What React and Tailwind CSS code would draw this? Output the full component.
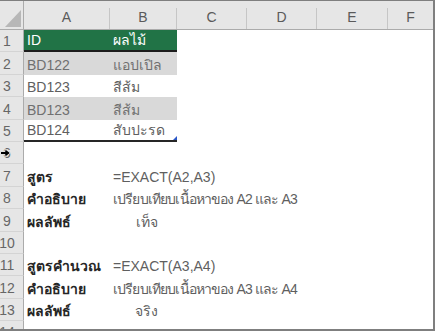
const cols = ["A", "B", "C", "D", "E", "F"];

const FONT = { fontFamily: '"Liberation Sans", "Noto Sans", "DejaVu Sans", sans-serif' };

const rows = [
  { n: 1, a: "ID", b: "ผลไม้", kind: "head" },
  { n: 2, a: "BD122", b: "แอปเปิล", kind: "zebra" },
  { n: 3, a: "BD123", b: "สีส้ม", kind: "plain" },
  { n: 4, a: "BD123", b: "สีส้ม", kind: "zebra" },
  { n: 5, a: "BD124", b: "สับปะรด", kind: "last" },
  { n: 6 },
  { n: 7, a: "สูตร", b: "=EXACT(A2,A3)", kind: "label" },
  { n: 8, a: "คำอธิบาย", b: "เปรียบเทียบเนื้อหาของ A2 และ A3", kind: "desc" },
  { n: 9, a: "ผลลัพธ์", b: "เท็จ", kind: "result" },
  { n: 10 },
  { n: 11, a: "สูตรคำนวณ", b: "=EXACT(A3,A4)", kind: "label" },
  { n: 12, a: "คำอธิบาย", b: "เปรียบเทียบเนื้อหาของ A3 และ A4", kind: "desc" },
  { n: 13, a: "ผลลัพธ์", b: "จริง", kind: "result" },
  { n: 14 },
];

function RowNum({ n }) {
  return (
    <div className="relative flex items-end justify-center pr-[9px] pb-[2px] bg-[#e6e6e6] border-r border-b border-r-[#ababab] border-b-[#d4d4d4] text-[14px] leading-[16px] text-[#666]">
      {n}
      {n === 6 && (
        <svg className="absolute left-0 top-[6px]" width="11" height="10" viewBox="0 0 11 10">
          <path d="M0.5 3.5 H5 V0.8 L10.3 5 L5 9.2 V6.5 H0.5 Z" fill="#000" stroke="#fff" strokeWidth="0.8" />
        </svg>
      )}
    </div>
  );
}

function DataRow({ r }) {
  const k = r.kind;
  let cellA = "";
  let cellB = "";
  if (k === "head") {
    cellA = "bg-[#217346] text-white border-b-2 border-[#1c1c1c]";
    cellB = cellA;
  } else if (k === "zebra") {
    cellA = "bg-[#d9d9d9] text-[#707070]";
    cellB = cellA;
  } else if (k === "plain") {
    cellA = "text-[#5f5f5f]";
    cellB = cellA;
  } else if (k === "last") {
    cellA = "text-[#5f5f5f] border-b-2 border-[#262626]";
    cellB = cellA + " relative";
  } else if (k === "label") {
    cellA = "font-bold text-[#262626]";
    cellB = "text-[#5f5f5f] whitespace-nowrap text-[13px]";
  } else if (k === "desc") {
    cellA = "font-bold text-[#262626]";
    cellB = "text-[#5f5f5f] whitespace-nowrap text-[12px] tracking-[-0.85px]";
  } else if (k === "result") {
    cellA = "font-bold text-[#262626]";
    cellB = "text-[#5f5f5f] justify-center pl-[6px] text-[13px]";
  }
  return (
    <div className="grid grid-cols-[24px_86px_67px_70px_70px_71px_1fr] h-[22.4px] shrink-0">
      <RowNum n={r.n} />
      <div className={`flex items-end pl-[3px] pb-[2px] text-[14px] leading-[16px] whitespace-nowrap ${cellA}`}>
        {r.a}
      </div>
      <div className={`flex items-end pl-[3px] pb-[2px] text-[14px] leading-[16px] ${cellB}`}>
        {r.b}
        {k === "last" && (
          <svg className="absolute right-0 bottom-0" width="4" height="4" viewBox="0 0 4 4">
            <path d="M4 0 V4 H0 Z" fill="#2b57c7" />
          </svg>
        )}
      </div>
      <div />
      <div />
      <div />
      <div />
    </div>
  );
}

export default function App() {
  return (
    <div
      className="w-[435px] h-[331px] bg-white border-t border-r-2 border-b-2 border-[#7f7f7f] overflow-hidden flex flex-col"
      style={FONT}
    >
      {/* COLUMN HEADERS */}
      <div className="grid grid-cols-[24px_86px_67px_70px_70px_71px_1fr] h-[29px] shrink-0 bg-[#e6e6e6] border-b border-[#ababab]">
        <div className="flex items-end justify-end pr-[2px] pb-[2px] border-r border-[#ababab]">
          <svg width="16" height="17" viewBox="0 0 16 17">
            <path d="M16 0 V17 H0 Z" fill="#b7b7b7" />
          </svg>
        </div>
        {cols.map((c, i) => (
          <div key={c} className="flex">
            <div className="flex-1 flex items-end justify-center pb-[4px] text-[14px] leading-[16px] text-[#5a5a5a]">
              {c}
            </div>
            {i < cols.length - 1 && <div className="w-px h-[21px] self-end bg-[#c6c6c6]" />}
          </div>
        ))}
      </div>

      {/* ROWS */}
      {rows.map((r) => (
        <DataRow key={r.n} r={r} />
      ))}
    </div>
  );
}
